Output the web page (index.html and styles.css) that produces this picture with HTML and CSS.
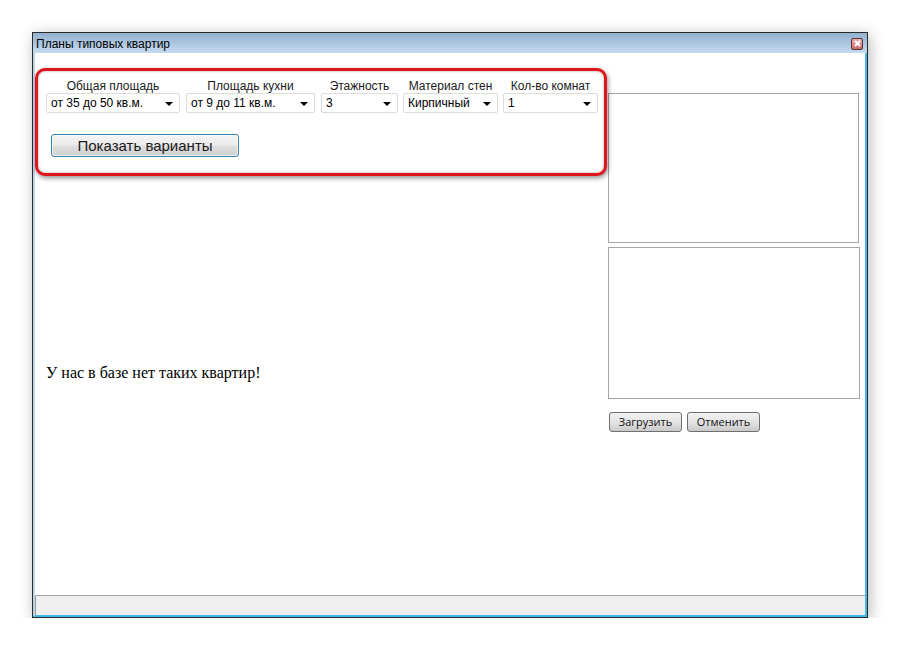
FILE: index.html
```html
<!DOCTYPE html>
<html lang="ru">
<head>
    <meta charset="UTF-8">
    <title>Планы типовых квартир</title>
    <link rel="stylesheet" href="styles.css">
</head>
<body>
    <div class="window">
        <div class="titlebar">
            <span class="title">Планы типовых квартир</span>
            <div class="close-btn">
                <svg width="7" height="7" viewBox="0 0 7 7"><path d="M1 1 L6 6 M6 1 L1 6" stroke="#fff" stroke-width="1.8"/></svg>
            </div>
        </div>
        <div class="client">
            <div class="content">
                <div class="left-col">
                    <div class="filter-box">
                        <div class="filters">
                            <div class="field f-area">
                                <label>Общая площадь</label>
                                <div class="select">от 35 до 50 кв.м.<span class="arrow"></span></div>
                            </div>
                            <div class="field f-kitchen">
                                <label>Площадь кухни</label>
                                <div class="select">от 9 до 11 кв.м.<span class="arrow"></span></div>
                            </div>
                            <div class="field f-floors">
                                <label>Этажность</label>
                                <div class="select">3<span class="arrow"></span></div>
                            </div>
                            <div class="field f-walls">
                                <label>Материал стен</label>
                                <div class="select">Кирпичный<span class="arrow"></span></div>
                            </div>
                            <div class="field f-rooms">
                                <label>Кол-во комнат</label>
                                <div class="select">1<span class="arrow"></span></div>
                            </div>
                        </div>
                        <button class="show-btn">Показать варианты</button>
                    </div>
                    <p class="message">У нас в базе нет таких квартир!</p>
                </div>
                <div class="right-col">
                    <div class="preview preview-top"></div>
                    <div class="preview preview-bottom"></div>
                    <div class="actions">
                        <button class="small-btn">Загрузить</button>
                        <button class="small-btn">Отменить</button>
                    </div>
                </div>
            </div>
            <div class="statusbar"></div>
        </div>
    </div>
</body>
</html>
```

FILE: styles.css
```css
body {
    margin: 0;
    background: #fff;
    font-family: "Liberation Sans", Arial, sans-serif;
}

.window {
    margin: 32px 0 0 32px;
    width: 834px;
    height: 584px;
    border: 1px solid #2a2a2a;
    display: flex;
    flex-direction: column;
    box-shadow: 2px 3px 14px rgba(0, 0, 0, 0.28);
}

.titlebar {
    height: 20px;
    background: linear-gradient(#93b0cf, #c5dbf1);
    display: flex;
    align-items: center;
    justify-content: space-between;
    padding: 0 4px 0 3px;
}

.title {
    font-size: 12px;
    color: #000;
    padding-top: 2px;
}

.close-btn {
    width: 10px;
    height: 10px;
    border: 1px solid #5a2f35;
    border-radius: 2px;
    background: linear-gradient(#eab0b0, #c86a6a);
    display: flex;
    align-items: center;
    justify-content: center;
    margin-top: 1px;
}

.close-btn svg {
    display: block;
}

.client {
    flex: 1;
    display: flex;
    flex-direction: column;
    border-left: 2px solid #bcd5ee;
    border-right: 2px solid #45b6e5;
    border-bottom: 2px solid #45b6e5;
    background: #fff;
}

.content {
    flex: 1;
    display: flex;
}

.left-col {
    width: 573px;
    padding-top: 15px;
}

.filter-box {
    height: 94px;
    border: 3px solid #e2141c;
    border-radius: 10px;
    padding: 8px 0 0 8px;
    box-sizing: content-box;
    width: 558px;
    box-shadow: 1px 2px 5px rgba(0, 0, 0, 0.45), inset 0 0 3px rgba(0, 0, 0, 0.35);
    position: relative;
    z-index: 1;
    background: #fff;
}

.filters {
    display: flex;
}

.field {
    display: flex;
    flex-direction: column;
    align-items: center;
    margin-right: 6px;
}

.field label {
    font-size: 12px;
    color: #1a1a1a;
    line-height: 14px;
    height: 14px;
}

.f-area .select { width: 134px; }
.f-kitchen .select { width: 129px; }
.f-floors .select { width: 77px; }
.f-floors { margin-right: 5px; }
.f-walls .select { width: 95px; }
.f-walls { margin-right: 5px; }
.f-rooms .select { width: 95px; }

.select {
    position: relative;
    height: 20px;
    box-sizing: border-box;
    border: 1px solid #dcdcdc;
    border-radius: 2px;
    font-size: 12px;
    line-height: 19px;
    padding-left: 4px;
    color: #000;
    text-align: left;
}

.arrow {
    position: absolute;
    right: 6px;
    top: 8px;
    width: 0;
    height: 0;
    border-left: 4px solid transparent;
    border-right: 4px solid transparent;
    border-top: 4px solid #000;
}

.show-btn {
    display: block;
    margin: 21px 0 0 5px;
    width: 188px;
    height: 23px;
    border: 1px solid #3c7fb1;
    border-radius: 3px;
    background: linear-gradient(#f4f4f4 0%, #ececec 45%, #dedede 55%, #d0d0d0 100%);
    font-family: "Liberation Sans", Arial, sans-serif;
    font-size: 15px;
    color: #1a1a1a;
    padding: 0;
    box-shadow: inset 0 0 0 1px rgba(255, 255, 255, 0.7);
}

.message {
    margin: 188px 0 0 11px;
    font-family: "Liberation Serif", "Times New Roman", serif;
    font-size: 16px;
    line-height: 18px;
    color: #000;
}

.right-col {
    width: 252px;
    padding-top: 40px;
}

.preview {
    border: 1px solid #a5a5a5;
    box-sizing: border-box;
}

.preview-top {
    width: 251px;
    height: 150px;
}

.preview-bottom {
    width: 252px;
    height: 152px;
    margin-top: 4px;
}

.actions {
    display: flex;
    gap: 5px;
    margin-top: 13px;
    padding-left: 1px;
}

.small-btn {
    width: 73px;
    height: 20px;
    border: 1px solid #707070;
    border-radius: 3px;
    background: linear-gradient(#f2f2f2 0%, #e4e4e4 50%, #c9c9c9 100%);
    font-family: "Open Sans", "Liberation Sans", sans-serif;
    font-size: 11px;
    color: #111;
    padding: 0;
    line-height: 16px;
}

.statusbar {
    height: 19px;
    background: #efefef;
    border-top: 1px solid #a3a3a3;
    border-left: 1px solid #9a9a9a;
}
```
